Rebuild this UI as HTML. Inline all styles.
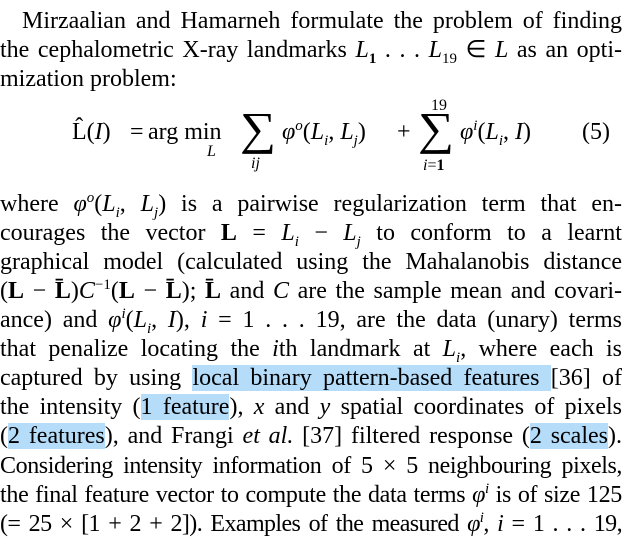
<!DOCTYPE html>
<html><head><meta charset="utf-8"><style>
body{margin:0;width:640px;height:548px;background:#fff;overflow:hidden;position:relative;font-family:"Liberation Serif",serif;font-size:24px;color:#000}
.l{position:absolute;left:0;width:622px;line-height:28px;height:28px;white-space:nowrap;text-align:justify;text-align-last:justify}
.h{background:#b5dcf9}
i{font-style:italic}
sub,sup{line-height:0;font-size:15px}
.eq{position:absolute;white-space:nowrap;line-height:28px}
.s{font-size:16px}
.sum{position:absolute;font-size:46px;line-height:46px;transform:scaleX(1.1);transform-origin:left}
</style></head><body>
<div class="l" style="top:7px;left:22px;width:600px">Mirzaalian and Hamarneh formulate the problem of finding</div>
<div class="l" style="top:36px">the cephalometric X-ray landmarks <i>L</i><sub><b>1</b></sub> . . . <i>L</i><sub>19</sub> ∈ <i>L</i> as an opti-</div>
<div class="l" style="top:65px;text-align-last:left">mization problem:</div>

<div class="eq" style="top:118px;left:72px">L̂(<i>I</i>)</div>
<div class="eq" style="top:118px;left:130px">=</div>
<div class="eq" style="top:118px;left:148px">arg min</div>
<div class="eq s" style="top:138px;left:207px"><i>L</i></div>
<div class="sum" style="top:106px;left:240px">∑</div>
<div class="eq s" style="top:150px;left:251px"><i>ij</i></div>
<div class="eq" style="top:118px;left:282px"><i>φ</i><sup><i>o</i></sup>(<i>L<sub>i</sub></i>, <i>L<sub>j</sub></i>)</div>
<div class="eq" style="top:118px;left:397px">+</div>
<div class="eq s" style="top:92px;left:431px">19</div>
<div class="sum" style="top:106px;left:418px">∑</div>
<div class="eq s" style="top:152px;left:423px"><i>i</i>=<b>1</b></div>
<div class="eq" style="top:118px;left:460px"><i>φ</i><sup><i>i</i></sup>(<i>L<sub>i</sub></i>, <i>I</i>)</div>
<div class="eq" style="top:118px;left:582px">(5)</div>

<div class="l" style="top:190px">where <i>φ</i><sup><i>o</i></sup>(<i>L<sub>i</sub></i>, <i>L<sub>j</sub></i>) is a pairwise regularization term that en-</div>
<div class="l" style="top:219px">courages the vector <b>L</b> = <i>L<sub>i</sub></i> − <i>L<sub>j</sub></i> to conform to a learnt</div>
<div class="l" style="top:248px">graphical model (calculated using the Mahalanobis distance</div>
<div class="l" style="top:277px">(<b>L</b> − <b>L̄</b>)<i>C</i><sup>−1</sup>(<b>L</b> − <b>L̄</b>); <b>L̄</b> and <i>C</i> are the sample mean and covari-</div>
<div class="l" style="top:306px">ance) and <i>φ</i><sup><i>i</i></sup>(<i>L<sub>i</sub></i>, <i>I</i>), <i>i</i> = 1 . . . 19, are the data (unary) terms</div>
<div class="l" style="top:335px">that penalize locating the <i>i</i>th landmark at <i>L<sub>i</sub></i>, where each is</div>
<div class="l" style="top:364px">captured by using <span class="h">local binary pattern-based features </span>[36] of</div>
<div class="l" style="top:393px">the intensity (<span class="h">1 feature</span>), <i>x</i> and <i>y</i> spatial coordinates of pixels</div>
<div class="l" style="top:422px">(<span class="h">2 features</span>), and Frangi <i>et al.</i> [37] filtered response (<span class="h">2 scales</span>).</div>
<div class="l" style="top:452px;letter-spacing:-0.4px">Considering intensity information of 5 × 5 neighbouring pixels,</div>
<div class="l" style="top:481px;letter-spacing:-0.3px">the final feature vector to compute the data terms <i>φ</i><sup><i>i</i></sup> is of size 125</div>
<div class="l" style="top:510px;letter-spacing:-0.6px">(= 25 × [1 + 2 + 2]). Examples of the measured <i>φ</i><sup><i>i</i></sup>, <i>i</i> = 1 . . . 19,</div>
</body></html>
